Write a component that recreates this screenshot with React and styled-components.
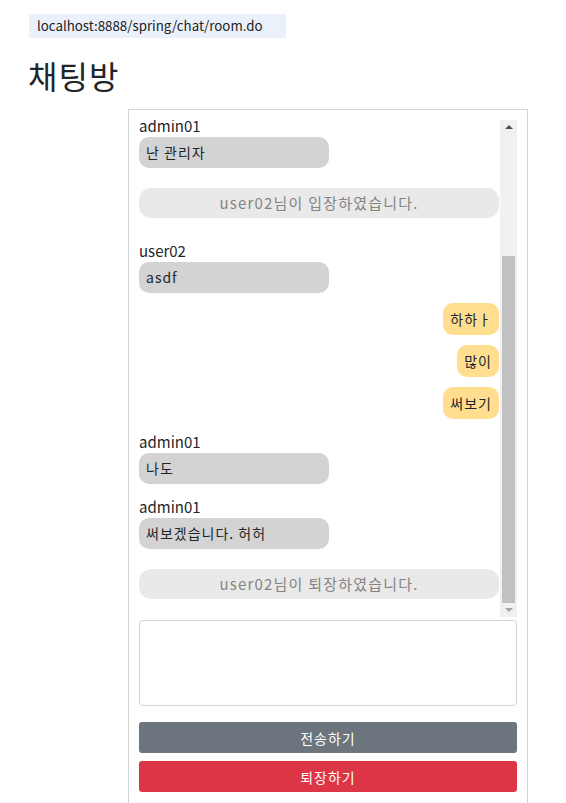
import React, { useLayoutEffect, useRef, useState } from 'react'
import styled, { createGlobalStyle } from 'styled-components'

const GlobalStyle = createGlobalStyle`
  body {
    margin: 0;
    background: #fff;
    color: #212529;
    font-family: "Noto Sans CJK KR", "Noto Sans", sans-serif;
  }
`;

const Page = styled.div`
  padding: 14px 0 0 29px;
`;

const UrlBar = styled.div`
  width: 257px;
  height: 24px;
  box-sizing: border-box;
  padding-left: 8px;
  background: #ebf1fa;
  color: #202124;
  font-size: 13.3px;
  line-height: 24px;
`;

const Title = styled.h2`
  margin: 18px 0 15px -1px;
  font-size: 32px;
  font-weight: 400;
  line-height: 38px;
  letter-spacing: 1px;
`;

const Room = styled.div`
  width: 400px;
  margin-left: 99px;
  box-sizing: border-box;
  border: 1px solid #d4d4d4;
  padding: 10px 10px 20px;
`;

const ChatFrame = styled.div`
  display: flex;
  height: 497px;
`;

const ChatLog = styled.div`
  flex: 1;
  min-width: 0;
  overflow: hidden;
`;

const ScrollBar = styled.div`
  display: flex;
  flex-direction: column;
  width: 17px;
  background: #f1f1f1;
`;

const ArrowButton = styled.div`
  display: flex;
  align-items: center;
  justify-content: center;
  height: 14px;

  &::after {
    content: '';
    border-left: 4px solid transparent;
    border-right: 4px solid transparent;
    ${p =>
      p.$down
        ? 'border-top: 4px solid #a3a3a3;'
        : 'border-bottom: 4px solid #505050;'}
  }
`;

const Rail = styled.div`
  flex: 1;
  display: flex;
  flex-direction: column;
`;

const Thumb = styled.div`
  margin: 0 2px;
  background: #c1c1c1;
`;

const MessageList = styled.div`
  display: flex;
  flex-direction: column;
  gap: 10px;
  padding: 0 1px 8px 0;
`;

const Incoming = styled.div`
  display: flex;
  flex-direction: column;
  align-items: flex-start;
`;

const Sender = styled.div`
  padding-top: 1px;
  font-size: 15px;
  line-height: 23px;
`;

const Bubble = styled.div`
  box-sizing: border-box;
  width: ${p => (p.$mine ? 'auto' : '190px')};
  height: ${p => (p.$mine ? '32px' : '31px')};
  align-self: ${p => (p.$mine ? 'flex-end' : 'flex-start')};
  padding: 0 7px;
  border-radius: 10px;
  background: ${p => (p.$mine ? '#ffdf8f' : '#d3d3d3')};
  font-size: 14px;
  line-height: ${p => (p.$mine ? '32px' : '31px')};
  letter-spacing: 1px;
  white-space: nowrap;
`;

const Notice = styled.div`
  margin: 10px 0;
  height: 30px;
  border-radius: 12px;
  background: #e9e9e9;
  color: #848484;
  text-align: center;
  font-size: 15px;
  line-height: 30px;
  letter-spacing: 1.2px;
`;

const MessageInput = styled.textarea`
  display: block;
  width: 100%;
  height: 86px;
  margin-top: 3px;
  box-sizing: border-box;
  padding: 6px 12px;
  border: 1px solid #ced4da;
  border-radius: 4px;
  resize: none;
  font: inherit;
  outline: none;
`;

const Actions = styled.div`
  display: flex;
  flex-direction: column;
  gap: 8px;
  margin-top: 16px;
`;

const Button = styled.button`
  height: 31px;
  border: none;
  border-radius: 3px;
  background: ${p => (p.$variant === 'danger' ? '#dc3545' : '#6c757d')};
  color: #fff;
  font-family: inherit;
  font-size: 14px;
  letter-spacing: 1px;
  cursor: pointer;
`;

const messages = [
  { type: 'notice', text: 'admin01님이 입장하였습니다.' },
  { type: 'in', from: 'admin01', text: '안녕하세요' },
  { type: 'out', text: '안녕하세요' },
  { type: 'in', from: 'admin01', text: '난 관리자' },
  { type: 'notice', text: 'user02님이 입장하였습니다.' },
  { type: 'in', from: 'user02', text: 'asdf' },
  { type: 'out', text: '하하ㅏ' },
  { type: 'out', text: '많이' },
  { type: 'out', text: '써보기' },
  { type: 'in', from: 'admin01', text: '나도' },
  { type: 'in', from: 'admin01', text: '써보겠습니다. 허허' },
  { type: 'notice', text: 'user02님이 퇴장하였습니다.' },
];

const ARROW = 14;

const Message = ({ msg }) => {
  if (msg.type === 'notice') return <Notice>{msg.text}</Notice>;
  if (msg.type === 'out') return <Bubble $mine>{msg.text}</Bubble>;
  return (
    <Incoming>
      <Sender>{msg.from}</Sender>
      <Bubble>{msg.text}</Bubble>
    </Incoming>
  );
};

const App = () => {
  const logRef = useRef(null);
  const [thumb, setThumb] = useState({ top: 0, height: 0 });

  // scroll to newest message and size the thumb from it
  useLayoutEffect(() => {
    const el = logRef.current;
    if (!el) return;
    el.scrollTop = el.scrollHeight;
    const rail = el.clientHeight - ARROW * 2;
    setThumb({
      top: (rail * el.scrollTop) / el.scrollHeight,
      height: (rail * el.clientHeight) / el.scrollHeight,
    });
  }, []);

  return (
    <Page>
      <GlobalStyle />
      <UrlBar>localhost:8888/spring/chat/room.do</UrlBar>
      <Title>채팅방</Title>
      <Room>
        <ChatFrame>
          <ChatLog ref={logRef}>
            <MessageList>
              {messages.map((m, i) => (
                <Message key={i} msg={m} />
              ))}
            </MessageList>
          </ChatLog>
          <ScrollBar>
            <ArrowButton />
            <Rail>
              <Thumb style={{ marginTop: thumb.top, height: thumb.height }} />
            </Rail>
            <ArrowButton $down />
          </ScrollBar>
        </ChatFrame>
        <MessageInput />
        <Actions>
          <Button>전송하기</Button>
          <Button $variant="danger">퇴장하기</Button>
        </Actions>
      </Room>
    </Page>
  );
};

export default App
